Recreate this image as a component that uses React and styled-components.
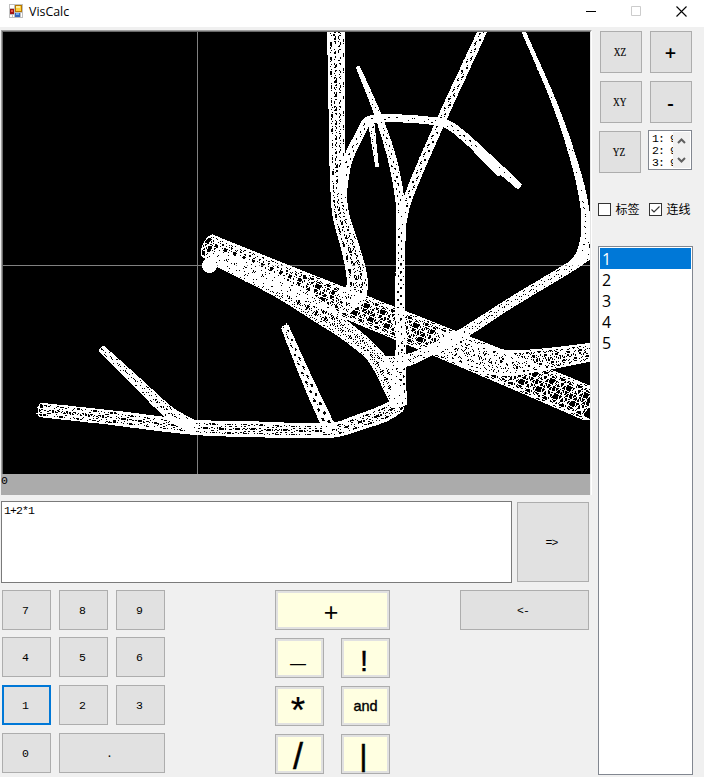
import React from "react";
import styled, { createGlobalStyle, css } from "styled-components";

const GlobalStyle = createGlobalStyle`
  * { box-sizing: border-box; }
  body {
    margin: 0;
    background: #f0f0f0;
    overflow: hidden;
  }
`;

const bitmapFont = css`
  font-family: "Liberation Mono", "Noto Sans CJK SC", monospace;
  font-size: 11.5px;
  letter-spacing: -0.9px;
`;

const Window = styled.main`
  width: 704px;
  height: 777px;
  display: flex;
  flex-direction: column;
  background: #f0f0f0;
  color: #000;
  overflow: hidden;
`;

const TitleBar = styled.header`
  height: 27px;
  flex: none;
  display: flex;
  align-items: flex-start;
  background: #fff;
  padding-left: 9px;
`;

const AppIcon = styled.svg`
  width: 14px;
  height: 14px;
  margin-top: 4px;
`;

const Title = styled.h1`
  margin: 0 0 0 6px;
  flex: 1;
  font: 400 12.4px/24px "Open Sans", sans-serif;
`;

const WindowControls = styled.div`
  display: flex;
  gap: 34px;
  padding: 6px 17px 0 0;

  svg { width: 11px; height: 11px; display: block; }
`;

const Body = styled.div`
  flex: 1;
  display: flex;
  padding-top: 3px;
`;

const Workspace = styled.section`
  width: 592px;
  flex: none;
`;

const Viewport = styled.div`
  width: 591px;
  margin-left: 1px;
  height: 465px;
  border-top: 1px solid #a0a0a0;
  border-left: 1px solid #a0a0a0;
  border-right: 1px solid #fff;
`;

const Scene = styled.svg`
  display: block;
  width: 589px;
  height: 443px;
  background: #000;
  border-top: 1px solid #696969;
  border-left: 1px solid #696969;
  border-right: 1px solid #e3e3e3;
`;

const StatusStrip = styled.div`
  ${bitmapFont}
  width: 589px;
  height: 21px;
  margin-left: -1px;
  background: #ababab;
  line-height: 14px;
`;

const ExpressionRow = styled.div`
  display: flex;
  gap: 5px;
  padding: 6px 0 0 1px;
`;

const Expression = styled.div`
  ${bitmapFont}
  width: 511px;
  height: 82px;
  border: 1px solid #7a7a7a;
  background: #fff;
  padding: 2px;
  line-height: 14px;
`;

const Button = styled.button`
  ${bitmapFont}
  width: ${({ $w = 49 }) => $w}px;
  height: ${({ $h = 40 }) => $h}px;
  padding: 1px 3px 0 0;
  display: flex;
  align-items: center;
  justify-content: center;
  border: 1px solid #adadad;
  background: #e1e1e1;
  color: #000;
  ${({ $focused }) => $focused && css`border: 2px solid #0078d7;`}
`;

const EnterButton = styled(Button)`
  margin-top: 1px;
`;

const Controls = styled.div`
  display: flex;
  align-items: flex-start;
  padding: 7px 0 0 2px;
`;

const NumberPad = styled.div`
  width: 163px;
  display: grid;
  grid-template-columns: repeat(3, 49px);
  grid-template-rows: 39px 40px 40px 40px;
  row-gap: 8px;
  column-gap: 8px;

  > :last-child {
    grid-column: span 2;
    padding-right: 6px;
  }
`;

const OperatorPad = styled.div`
  margin-left: 110px;
  width: 115px;
  display: grid;
  grid-template-columns: 49px 49px;
  gap: 8px 17px;

  > :first-child { grid-column: span 2; }
`;

const OperatorButton = styled(Button)`
  padding: 2px;
`;

const OperatorFace = styled.span`
  width: 100%;
  height: 100%;
  display: flex;
  align-items: flex-start;
  justify-content: center;
  background: #ffffe1;
  font-family: "Liberation Sans", sans-serif;
  letter-spacing: 0;
  font-size: ${({ $size }) => $size}px;
  line-height: 34px;
  padding-top: ${({ $drop = 0 }) => $drop}px;
  padding-right: ${({ $shift = 0 }) => $shift}px;
  -webkit-text-stroke: ${({ $stroke = 0 }) => $stroke}px #000;
`;

const BackButton = styled(Button)`
  margin-left: 70px;
`;

const Sidebar = styled.aside`
  width: 112px;
  padding: 1px 0 0 6px;
`;

const ViewRow = styled.div`
  display: flex;
  gap: 8px;
  padding-left: 2px;
  margin-bottom: 8px;
`;

const LastViewRow = styled(ViewRow)`
  gap: 7px;
  padding-left: 1px;
  margin: 0;
  align-items: flex-start;
`;

const PlaneLabel = styled.span`
  font: 12px "Liberation Serif", serif;
  letter-spacing: 0;
  transform: scaleX(0.78);
  -webkit-text-stroke: 0.15px #000;
`;

const ZoomLabel = styled.span`
  font: 600 20px/20px "Open Sans", sans-serif;
  letter-spacing: 0;
  padding-left: 2px;
`;

const PointList = styled.div`
  width: 44px;
  height: 40px;
  margin-top: -1px;
  display: flex;
  border: 1px solid #828790;
  background: #fff;
  padding: 1px;
`;

const PointLines = styled.div`
  ${bitmapFont}
  width: 23px;
  height: 36px;
  padding: 1px 0 0 2px;
  overflow: hidden;
  white-space: pre;
  line-height: 12px;
`;

const SpinArrows = styled.svg`
  width: 17px;
  height: 36px;
  background: #f0f0f0;
`;

const Options = styled.div`
  display: flex;
  margin-top: 27px;
  height: 18px;
`;

const Option = styled.label`
  width: 51px;
  display: flex;
  align-items: center;
  gap: 4px;
  font: 12px/16px "Noto Sans CJK SC", sans-serif;
  white-space: nowrap;
`;

const OptionText = styled.span`
  padding: 0 0 1px 0.5px;
`;

const CheckBox = styled.svg`
  width: 13px;
  height: 13px;
  flex: none;
  background: #fff;
  border: 1px solid #333;
`;

const ListBox = styled.ul`
  list-style: none;
  margin: 28px 0 0;
  padding: 1px;
  width: 95px;
  height: 529px;
  background: #fff;
  border: 1px solid #828790;
`;

const ListItem = styled.li`
  height: 21px;
  padding-left: 2px;
  font: 16px/22px "Open Sans", sans-serif;
  color: ${({ $selected }) => ($selected ? "#fff" : "#000")};
  background: ${({ $selected }) => ($selected ? "#0078d7" : "transparent")};
`;

/* Each tube is a centre line of [x, y, radius] points with its mesh density. */
const tubes = [
  { sides: 10, step: 5, points: [[208, 246, 12], [240, 261, 14], [300, 285, 14]] },
  { sides: 8, step: 9, points: [[300, 285, 14], [397, 324, 15], [490, 362, 16], [592, 405, 17]] },
  { sides: 10, step: 5, points: [[213, 257, 7], [245, 270, 10], [280, 288, 10], [320, 312, 11], [342, 328, 9], [360, 342, 8.5], [372, 353, 8], [383, 368, 9], [395, 393, 9], [399, 404, 7]] },
  { sides: 8, step: 6, points: [[592, 352, 9], [540, 360, 11], [505, 363, 13], [470, 355, 13], [435, 340, 11]] },
  { sides: 11, step: 7, points: [[336, 30, 8.5], [337, 130, 7.6], [338, 180, 7.5], [341, 215, 8], [351, 250, 9], [357, 277, 10], [356, 292, 11], [342, 303, 12]] },
  { sides: 8, step: 8, points: [[41, 410, 7], [115, 418, 7]] },
  { sides: 10, step: 8, points: [[115, 418, 7], [190, 427, 7], [245, 429, 7.5], [333, 430, 7], [360, 422, 7.5], [385, 413, 8], [399, 405, 7]] },
  { sides: 8, step: 5, points: [[102, 349, 3.5], [140, 385, 5], [170, 413, 6], [195, 427, 6]] },
  { sides: 8, step: 5, points: [[285, 327, 3.5], [306, 377, 5], [327, 423, 6], [331, 430, 6]] },
  { sides: 9, step: 4, points: [[358, 67, 1.6], [378, 115, 3], [392, 158, 4], [400, 200, 4.2], [401, 225, 4.3], [400, 300, 4.3], [401, 350, 5], [399, 380, 7], [399, 403, 8]] },
  { sides: 8, step: 5, points: [[483, 30, 4], [440, 123, 4.2], [407, 201, 4], [401, 228, 4]] },
  { sides: 9, step: 4, points: [[341, 195, 5], [347, 162, 4.5], [361, 132, 4], [368, 121, 4], [385, 118, 3.6], [440, 122, 3.6], [455, 129, 4], [490, 160, 4], [519, 186, 3]] },
  { sides: 6, step: 4, points: [[371, 121, 3], [377, 166, 1.5]] },
  { sides: 6, step: 4, points: [[478, 150, 4], [500, 174, 2.5]] },
  { sides: 7, step: 3, points: [[523, 30, 1.6], [556, 107, 2.2], [575, 164, 3], [584, 202, 3.8], [586, 230, 4.3], [582, 253, 5], [572, 266, 4]] },
  { sides: 8, step: 5, points: [[592, 252, 5], [570, 267, 4.8], [512, 302, 4.8], [457, 337, 5], [425, 353, 5], [404, 361, 6], [384, 362, 5]] },
];

function smoothPoints(points, step) {
  const result = [];
  for (let i = 0; i < points.length - 1; i++) {
    const a = points[Math.max(0, i - 1)];
    const b = points[i];
    const c = points[i + 1];
    const d = points[Math.min(points.length - 1, i + 2)];
    const count = Math.max(1, Math.round(Math.hypot(c[0] - b[0], c[1] - b[1]) / step));
    for (let n = 0; n < count; n++) {
      const t = n / count;
      result.push(b.map((_, k) => {
        const m0 = Math.hypot(c[0] - b[0], c[1] - b[1]) / (Math.hypot(c[0] - a[0], c[1] - a[1]) || 1);
        const m1 = Math.hypot(c[0] - b[0], c[1] - b[1]) / (Math.hypot(d[0] - b[0], d[1] - b[1]) || 1);
        const h = t * t * t;
        const s = t * t;
        return (2 * h - 3 * s + 1) * b[k] + (h - 2 * s + t) * (c[k] - a[k]) * m0
          + (3 * s - 2 * h) * c[k] + (h - s) * (d[k] - b[k]) * m1;
      }));
    }
  }
  result.push(points[points.length - 1]);
  return result;
}

function tubeMesh({ points, sides, step }, seed) {
  const centres = smoothPoints(points, step);
  const rings = centres.map(([x, y, r], i) => {
    const before = centres[Math.max(0, i - 1)];
    const after = centres[Math.min(centres.length - 1, i + 1)];
    const length = Math.hypot(after[0] - before[0], after[1] - before[1]) || 1;
    const ux = (after[0] - before[0]) / length;
    const uy = (after[1] - before[1]) / length;
    return Array.from({ length: sides }, (_, j) => {
      const angle = ((j + 0.3) / sides) * Math.PI * 2 + seed * 0.37;
      const across = Math.cos(angle) * r;
      const along = Math.sin(angle) * r * 0.42;
      return [x - uy * across + ux * along, y + ux * across + uy * along];
    });
  });
  const at = (p) => `${p[0].toFixed(1)} ${p[1].toFixed(1)}`;
  let path = "";
  rings.forEach((ring, i) => {
    path += `M${ring.map(at).join("L")}Z`;
    const next = rings[i + 1];
    if (next) {
      ring.forEach((p, j) => {
        const neighbour = (i + j) % 2 ? (j + 1) % sides : (j + sides - 1) % sides;
        path += `M${at(next[j])}L${at(p)}L${at(next[neighbour])}`;
      });
    }
  });
  return path;
}

const meshes = tubes.map(tubeMesh);

function VesselScene() {
  return (
    <Scene viewBox="3 32 587 442" shapeRendering="crispEdges">
      <path d="M197.5 32V474M3 265.5H590" stroke="#808080" />
      <g fill="none" stroke="#fff" strokeWidth="1">
        {meshes.map((d, i) => <path key={i} d={d} />)}
      </g>
      <circle cx="209.5" cy="265.5" r="7.5" fill="#fff" />
    </Scene>
  );
}

const operators = [
  { label: "+", w: 115, size: 25, drop: 2, shift: 3 },
  { label: "—", size: 16, drop: 6, shift: 3 },
  { label: "!", size: 29, drop: 3, shift: 3, stroke: 0.4 },
  { label: "*", size: 37, drop: 5, shift: 3, stroke: 0.2 },
  { label: "and", size: 14.5, drop: 0, shift: 0, stroke: 0.35 },
  { label: "/", size: 36, drop: 3, shift: 3, stroke: 0.4 },
  { label: "|", size: 30, drop: 2, shift: 4, stroke: 0.6 },
];

export default function App() {
  return (
    <>
      <GlobalStyle />
      <Window>
        <TitleBar>
          <AppIcon viewBox="0 0 14 14" shapeRendering="crispEdges">
            <path fill="#c0c0c0" d="M0 0h14v14H0z" />
            <path fill="#fff" d="M1 1h4v3H1zM1 11h2v2H1zM4 11h1v2H4zM12 9h1v4h-1z" />
            <path fill="#b87800" d="M6 1h7v7H6z" />
            <path fill="#ffd040" d="M7 2h5v5H7z" />
            <path fill="#fff0a0" d="M7 2h4v2H7z" />
            <path fill="#a01414" d="M1 5h4v5H1z" />
            <path fill="#e85a48" d="M2 6h2v2H2z" />
            <path fill="#3565b9" d="M6 9h5v4H6z" />
            <path fill="#6eabf0" d="M7 9h3v2H7z" />
          </AppIcon>
          <Title>VisCalc</Title>
          <WindowControls>
            <svg viewBox="0 0 11 11"><path d="M0 5.5h10" stroke="#000" /></svg>
            <svg viewBox="0 0 11 11"><path d="M.5.5h9v9h-9z" fill="none" stroke="#ccc" /></svg>
            <svg viewBox="0 0 11 11"><path d="M.5.5l10 10M10.5.5l-10 10" stroke="#000" strokeWidth="1.1" /></svg>
          </WindowControls>
        </TitleBar>
        <Body>
          <Workspace>
            <Viewport>
              <VesselScene />
              <StatusStrip>0</StatusStrip>
            </Viewport>
            <ExpressionRow>
              <Expression>1+2*1</Expression>
              <EnterButton $w={72} $h={80}>=&gt;</EnterButton>
            </ExpressionRow>
            <Controls>
              <NumberPad>
                {["7", "8", "9", "4", "5", "6", "1", "2", "3", "0"].map((digit) => (
                  <Button key={digit} $focused={digit === "1"}>{digit}</Button>
                ))}
                <Button $w={106}>.</Button>
              </NumberPad>
              <OperatorPad>
                {operators.map(({ label, w, size, drop, shift, stroke }) => (
                  <OperatorButton key={label} $w={w}>
                    <OperatorFace $size={size} $drop={drop} $shift={shift} $stroke={stroke}>{label}</OperatorFace>
                  </OperatorButton>
                ))}
              </OperatorPad>
              <BackButton $w={129}>&lt;-</BackButton>
            </Controls>
          </Workspace>
          <Sidebar>
            <ViewRow>
              <Button $w={42} $h={42}><PlaneLabel>XZ</PlaneLabel></Button>
              <Button $w={42} $h={42}><ZoomLabel>+</ZoomLabel></Button>
            </ViewRow>
            <ViewRow>
              <Button $w={42} $h={42}><PlaneLabel>XY</PlaneLabel></Button>
              <Button $w={42} $h={42}><ZoomLabel>-</ZoomLabel></Button>
            </ViewRow>
            <LastViewRow>
              <Button $w={42} $h={42}><PlaneLabel>YZ</PlaneLabel></Button>
              <PointList>
                <PointLines>{"1: 9\n2: 9\n3: 9"}</PointLines>
                <SpinArrows viewBox="0 0 17 36">
                  <path d="M5 11l3.5-3.5L12 11M5 26l3.5 3.5L12 26" fill="none" stroke="#606060" strokeWidth="2" />
                </SpinArrows>
              </PointList>
            </LastViewRow>
            <Options>
              <Option>
                <CheckBox viewBox="0 0 11 11" />
                <OptionText>标签</OptionText>
              </Option>
              <Option>
                <CheckBox viewBox="0 0 11 11">
                  <path d="M1.5 5.5l2.5 2.5 5.5-5.5" fill="none" stroke="#333" strokeWidth="1.1" />
                </CheckBox>
                <OptionText>连线</OptionText>
              </Option>
            </Options>
            <ListBox>
              {[1, 2, 3, 4, 5].map((item) => (
                <ListItem key={item} $selected={item === 1}>{item}</ListItem>
              ))}
            </ListBox>
          </Sidebar>
        </Body>
      </Window>
    </>
  );
}
